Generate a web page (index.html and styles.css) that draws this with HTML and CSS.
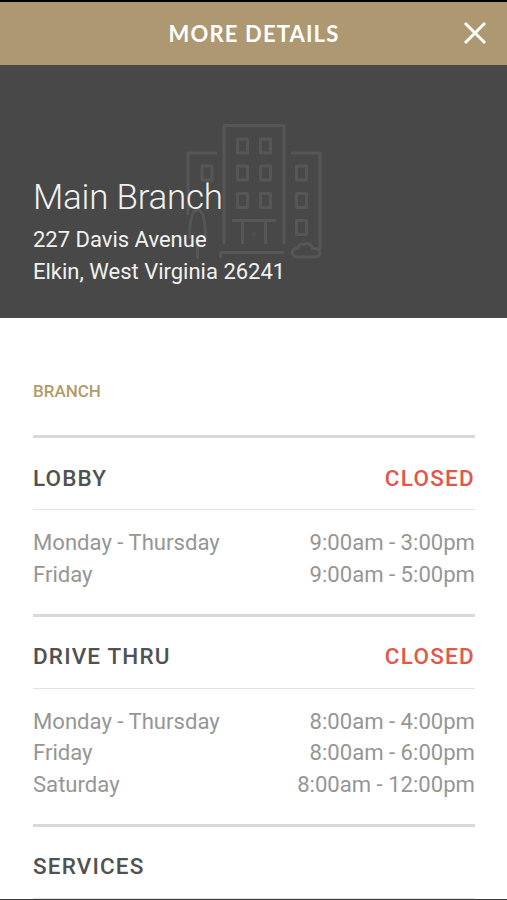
FILE: index.html
```html
<!DOCTYPE html>
<html lang="en">
<head>
<meta charset="utf-8">
<title>More Details</title>
<link rel="stylesheet" href="styles.css">
</head>
<body>
<div class="screen">
  <header class="bar">
    <h1 class="bar-title">MORE DETAILS</h1>
    <svg class="close" width="24" height="24" viewBox="0 0 24 24" aria-label="Close"><path d="M2 2 22 22M22 2 2 22"/></svg>
  </header>
  <section class="hero">
    <svg class="building" width="140" height="140" viewBox="184 121 140 140" aria-hidden="true">
      <path d="M224 244V125.5H284V244M217 153H188V215M291 153H320V250M220.500 258V252.500H284"/>
      <path d="M237.500 139h10v14h-10zM260.500 139h10v14h-10zM237.500 166h10v14h-10zM260.500 166h10v14h-10zM237.500 193.500h10v14h-10zM260.500 193.500h10v14h-10zM202 166h10v14h-10zM296.500 166h10v14h-10zM296.500 193.500h10v14h-10zM296.500 220.500h10v14h-10z"/>
      <path d="M232 220.500H276M242.500 221V244M265.500 221V244"/>
      <path d="M189.500 239C189.500 221 192 210 197.500 210S205.500 221 205.500 239M197.500 237V259"/>
      <path d="M297 257C290.500 257 290.500 247.500 298 248C299 242.500 303 244.500 304 244.500C307 242.500 312 244 312.500 248.500C322 247.500 322 257 315 257Z"/>
      <circle cx="254" cy="234.500" r=".4"/>
    </svg>
    <div class="address">
      <h2 class="name">Main Branch</h2>
      <p class="line">227 Davis Avenue</p>
      <p class="line city">Elkin, West Virginia 26241</p>
    </div>
  </section>
  <main class="content">
    <p class="kind">BRANCH</p>
    <section class="group">
      <div class="head"><h3 class="label">LOBBY</h3><span class="closed">CLOSED</span></div>
      <div class="hours">
        <div class="row"><span class="day">Monday - Thursday</span><span>9:00am - 3:00pm</span></div>
        <div class="row"><span class="day">Friday</span><span>9:00am - 5:00pm</span></div>
      </div>
    </section>
    <section class="group">
      <div class="head"><h3 class="label">DRIVE THRU</h3><span class="closed">CLOSED</span></div>
      <div class="hours">
        <div class="row"><span class="day">Monday - Thursday</span><span>8:00am - 4:00pm</span></div>
        <div class="row"><span class="day">Friday</span><span>8:00am - 6:00pm</span></div>
        <div class="row"><span class="day">Saturday</span><span>8:00am - 12:00pm</span></div>
      </div>
    </section>
    <section class="group">
      <div class="head"><h3 class="label">SERVICES</h3></div>
    </section>
  </main>
</div>
</body>
</html>
```
FILE: styles.css
```css
* { box-sizing: border-box; margin: 0; padding: 0; }
body { background: #fff; font-family: Roboto, "Liberation Sans", sans-serif; }
.screen { height: 900px; overflow: hidden; border-top: 2px solid #000; border-bottom: 1px solid #3c3a3c; display: flex; flex-direction: column; }
.bar { flex: none; height: 63px; background: #ae9872; display: grid; grid-template-columns: 1fr auto 1fr; align-items: center; padding: 0 20px; }
.bar-title { grid-column: 2; font: 700 22px/30px Lato, sans-serif; letter-spacing: 1.150px; color: #fff; white-space: nowrap; padding-left: 1px; }
.close { justify-self: end; margin-top: -2px; fill: none; stroke: #fff; stroke-width: 3; }
.hero { flex: none; height: 253px; position: relative; background: #484848; color: #f1f1f1; }
.building { position: absolute; left: 184px; top: 56px; fill: none; stroke: #565656; stroke-width: 3; stroke-linejoin: round; }
.address { position: relative; padding: 111px 33px 0; }
.name { font-size: 35px; font-weight: 300; line-height: 44px; letter-spacing: -.250px; }
.line { font-size: 22px; line-height: 31.700px; margin-top: 4px; }
.line.city { margin-top: 0; }
.content { flex: none; padding: 61px 32px 0 33px; }
.kind { height: 56px; font-size: 17px; font-weight: 500; line-height: 25px; color: #b09c6c; }
.group { border-top: 3px solid #d9d9d9; }
.head { height: 72px; padding-top: 8px; border-bottom: 1px solid #e2e2e2; display: flex; align-items: center; justify-content: space-between; }
.label { font-size: 22.500px; font-weight: 500; letter-spacing: 1.150px; color: #515151; }
.closed { font-size: 22.500px; font-weight: 500; letter-spacing: 1.250px; color: #e2574c; }
.hours { padding: 17px 0 23.100px; color: #969696; font-size: 22.100px; line-height: 31.700px; }
.row { display: flex; justify-content: space-between; }
```
